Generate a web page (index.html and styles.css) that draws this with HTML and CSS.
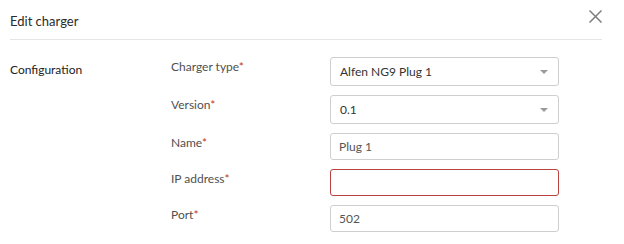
FILE: index.html
```html
<!DOCTYPE html>
<html>
<head lang="en">
    <meta charset="UTF-8">
    <title>Edit charger</title>
    <link rel="stylesheet" href="styles.css">
</head>
<body>
    <div class="modal">
        <div class="modal-header">
            <h2 class="modal-title">Edit charger</h2>
            <span class="close">
                <svg width="13" height="13" viewBox="0 0 13 13">
                    <path d="M0.5 0.5 L12.5 12.5 M12.5 0.5 L0.5 12.5" stroke="#7d7d7d" stroke-width="1.5" fill="none"/>
                </svg>
            </span>
        </div>
        <div class="section">
            <div class="section-title">Configuration</div>
            <div class="fields">
                <div class="row">
                    <label class="label">Charger type<span class="req">*</span></label>
                    <div class="select"><span>Alfen NG9 Plug 1</span><i class="caret"></i></div>
                </div>
                <div class="row">
                    <label class="label">Version<span class="req">*</span></label>
                    <div class="select"><span>0.1</span><i class="caret"></i></div>
                </div>
                <div class="row">
                    <label class="label">Name<span class="req">*</span></label>
                    <input class="input" type="text" value="Plug 1">
                </div>
                <div class="row">
                    <label class="label">IP address<span class="req">*</span></label>
                    <input class="input error" type="text" value="">
                </div>
                <div class="row">
                    <label class="label">Port<span class="req">*</span></label>
                    <input class="input" type="text" value="502">
                </div>
            </div>
        </div>
    </div>
</body>
</html>
```

FILE: styles.css
```css
*{
    padding: 0;
    margin: 0;
    box-sizing: border-box;
}
body{
    background: #fff;
    font-family: Lato, "Liberation Sans", sans-serif;
    color: #444;
}
.modal{
    width: 592px;
    margin-left: 10px;
}
.modal-header{
    height: 40px;
    padding-top: 11px;
    border-bottom: 1px solid #e6e6e6;
    display: flex;
    justify-content: space-between;
    align-items: flex-start;
}
.modal-title{
    font-size: 13px;
    line-height: 20px;
    font-weight: 400;
    color: #2b2b2b;
}
.close{
    display: block;
    width: 13px;
    height: 13px;
    margin-top: -1px;
}
.close svg{
    display: block;
}
.section{
    display: flex;
    padding-top: 17px;
}
.section-title{
    width: 161px;
    padding-top: 4px;
    font-size: 12px;
    line-height: 18px;
    font-weight: 400;
    color: #222;
}
.fields{
    display: flex;
    flex-direction: column;
    gap: 9px;
}
.row{
    display: flex;
    align-items: flex-start;
}
.label{
    width: 159px;
    padding-top: 1px;
    font-size: 12px;
    line-height: 18px;
    color: #505050;
}
.req{
    color: #c0392b;
}
.select, .input{
    width: 229px;
    border: 1px solid #cfcfcf;
    border-radius: 3px;
    background: #fff;
    font-family: Lato, "Liberation Sans", sans-serif;
    font-size: 12px;
    color: #333;
}
.select{
    height: 29px;
    padding: 0 10px 0 9px;
    display: flex;
    align-items: center;
    justify-content: space-between;
}
.caret{
    display: block;
    width: 0;
    height: 0;
    border-left: 4px solid transparent;
    border-right: 4px solid transparent;
    border-top: 4px solid #999;
}
.input{
    height: 27px;
    padding: 0 8px;
    outline: none;
    color: #555;
}
.input.error{
    border-color: #b8423e;
}
```
